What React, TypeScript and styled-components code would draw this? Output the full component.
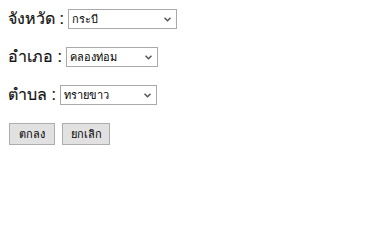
import React from "react";
import styled, { createGlobalStyle } from "styled-components";

const Global = createGlobalStyle`
  html, body { margin: 0; padding: 0; background: #ffffff; }
  body { margin: 8px; font-family: "Liberation Sans", Tahoma, sans-serif; color: #000; }
`;

const Form = styled.form`
  display: flex;
  flex-direction: column;
  gap: 18px;
  padding-top: 1px;
`;

const Row = styled.div`
  display: flex;
  align-items: center;
  height: 20px;
`;

const Label = styled.label`
  font-size: 16px;
  line-height: 20px;
  white-space: pre;
  color: #111;
  -webkit-text-stroke: 0.2px #111;
`;

const SelectWrap = styled.div<{ $w: number }>`
  position: relative;
  width: ${(p) => p.$w}px;
  height: 20px;
`;

const Select = styled.select`
  appearance: none;
  -webkit-appearance: none;
  width: 100%;
  height: 100%;
  box-sizing: border-box;
  border: 1px solid #a9a9a9;
  border-radius: 0;
  background: #fff;
  font-family: Tahoma, "Liberation Sans", sans-serif;
  font-size: 11px;
  padding: 0 18px 0 3px;
  color: #000;
  outline: none;
`;

const Chevron = styled.svg`
  position: absolute;
  right: 6px;
  top: 8px;
  width: 7px;
  height: 5px;
  pointer-events: none;
`;

const Buttons = styled.div`
  display: flex;
  gap: 7px;
  padding-left: 1px;
  height: 22px;
`;

const Button = styled.button<{ $w: number }>`
  width: ${(p) => p.$w}px;
  height: 22px;
  box-sizing: border-box;
  border: 1px solid #adadad;
  border-radius: 0;
  background: #e1e1e1;
  font-family: Tahoma, "Liberation Sans", sans-serif;
  font-size: 11px;
  color: #000;
  padding: 0;
`;

const Arrow = () => (
  <Chevron viewBox="0 0 7 5">
    <path d="M0.5 0.8 L3.5 3.8 L6.5 0.8" fill="none" stroke="#555" strokeWidth="1.5" />
  </Chevron>
);

const Field = ({ label, value, w }: { label: string; value: string; w: number }) => (
  <Row>
    <Label>{label}</Label>
    <SelectWrap $w={w}>
      <Select defaultValue={value}>
        <option value={value}>{value}</option>
      </Select>
      <Arrow />
    </SelectWrap>
  </Row>
);

export default function App() {
  return (
    <>
      <Global />
      <Form onSubmit={(e) => e.preventDefault()}>
        <Field label="จังหวัด : " value="กระบี่" w={109} />
        <Field label="อำเภอ : " value="คลองท่อม" w={92} />
        <Field label="ตำบล : " value="ทรายขาว" w={97} />
        <Buttons>
          <Button $w={46} type="submit">ตกลง</Button>
          <Button $w={48} type="button">ยกเลิก</Button>
        </Buttons>
      </Form>
    </>
  );
}
